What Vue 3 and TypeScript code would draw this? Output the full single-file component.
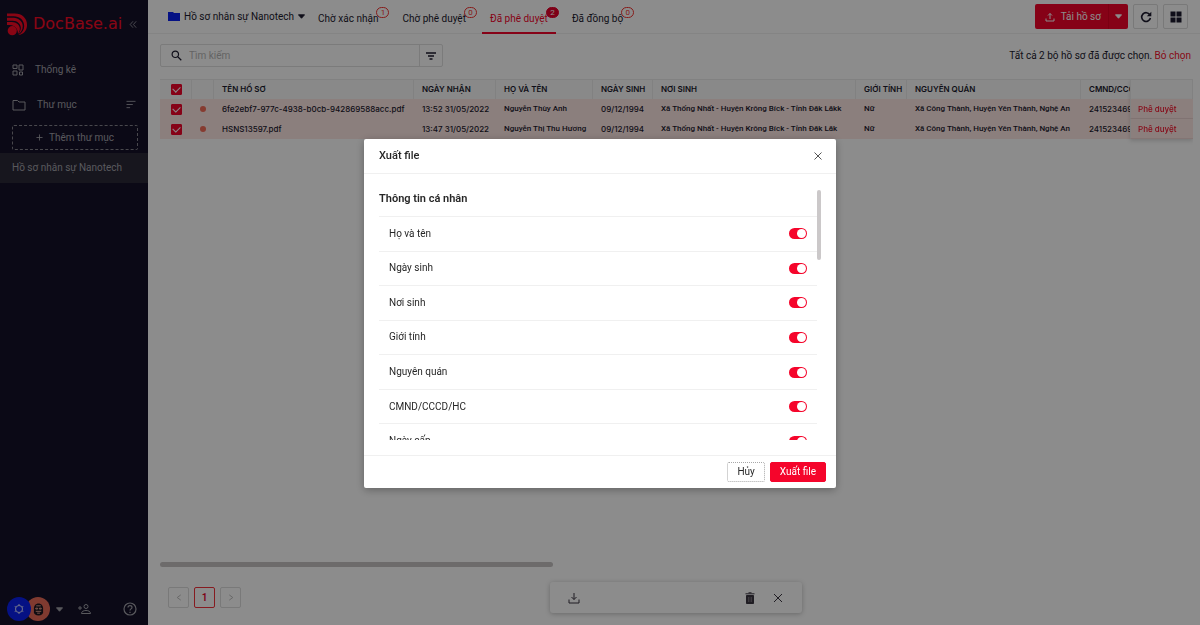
<script setup lang="ts">
import { ref } from 'vue'

interface Tab { label: string; count: string; active?: boolean }
interface Profile {
  file: string; received: string; name: string; dob: string
  birthplace: string; gender: string; origin: string; idNumber: string; selected: boolean
}
interface Field { id: string; label: string; on: boolean }

const tabs: Tab[] = [
  { label: 'Chờ xác nhận', count: '1' },
  { label: 'Chờ phê duyệt', count: '0' },
  { label: 'Đã phê duyệt', count: '2', active: true },
  { label: 'Đã đồng bộ', count: '0' },
]

const columns = ['TÊN HỒ SƠ', 'NGÀY NHẬN', 'HỌ VÀ TÊN', 'NGÀY SINH', 'NƠI SINH', 'GIỚI TÍNH', 'NGUYÊN QUÁN', 'CMND/CCCD/HC']

const rows = ref<Profile[]>([
  {
    file: '6fe2ebf7-977c-4938-b0cb-942869588acc.pdf', received: '13:52 31/05/2022', name: 'Nguyễn Thùy Anh',
    dob: '09/12/1994', birthplace: 'Xã Thống Nhất - Huyện Krông Bíck - Tỉnh Đăk Lăkk', gender: 'Nữ',
    origin: 'Xã Công Thành, Huyện Yên Thành, Nghệ An', idNumber: '241523469', selected: true,
  },
  {
    file: 'HSNS13597.pdf', received: '13:47 31/05/2022', name: 'Nguyễn Thị Thu Hương',
    dob: '09/12/1994', birthplace: 'Xã Thống Nhất - Huyện Krông Bíck - Tỉnh Đăk Lăk', gender: 'Nữ',
    origin: 'Xã Công Thành, Huyện Yên Thành, Nghệ An', idNumber: '241523469', selected: true,
  },
])
const allSelected = ref(true)
const query = ref('')

const fields = ref<Field[]>([
  { id: 'full-name', label: 'Họ và tên', on: true },
  { id: 'dob', label: 'Ngày sinh', on: true },
  { id: 'birthplace', label: 'Nơi sinh', on: true },
  { id: 'gender', label: 'Giới tính', on: true },
  { id: 'origin', label: 'Nguyên quán', on: true },
  { id: 'id-number', label: 'CMND/CCCD/HC', on: true },
  { id: 'issue-date', label: 'Ngày cấp', on: true },
])
</script>

<template>
  <div class="app">
    <aside class="sidebar">
      <div class="brand">
        <svg class="logo" viewBox="0 0 22 24" aria-hidden="true">
          <path d="M0 1h8c8 0 13 5 13 12 0 6-4 10-9 10.500 4-2.500 6-5.500 6-9.500C18 8 13 4 7 4H0z" />
          <path d="M0 5.500h7c5 0 9.500 4 9.500 8.500 0 4-2 7-5 9 2-2 3-5 3-7 0-4-3.500-7.500-8.500-7.500H0z" />
          <path d="M0 10h5c5 0 8.500 3.500 8.500 7 0 2-1 4-2 5 0-5-3.500-9-8.500-9H0z" />
          <circle cx="5.500" cy="19" r="4.800" />
        </svg>
        <span class="brand-name">DocBase.ai</span>
        <button class="icon-btn collapse" aria-label="Thu gọn">
          <svg viewBox="0 0 10 10"><path d="M5 1 1.500 5 5 9M9 1 5.500 5 9 9" /></svg>
        </button>
      </div>
      <nav class="nav">
        <a href="#stats" class="nav-item">
          <svg class="line" viewBox="0 0 12 12"><path d="M1 1h4v3.500H1zM7 1h4v5H7zM1 7h4v4H1zM7.500 8h3v3h-3z" /></svg>
          <span>Thống kê</span>
        </a>
        <a href="#folders" class="nav-item">
          <svg class="line folder" viewBox="0 0 14 12"><path d="M1 1.500h4.500l1.500 1.500h6v8H1z" /></svg>
          <span>Thư mục</span>
          <svg class="line sort" viewBox="0 0 12 10"><path d="M1 1.500h10M1 5h7M1 8.500h4" /></svg>
        </a>
      </nav>
      <button class="add-folder">
        <svg viewBox="0 0 8 8"><path d="M4 .5v7M.5 4h7" /></svg>
        <span>Thêm thư mục</span>
      </button>
      <a href="#nanotech" class="current-folder">Hồ sơ nhân sự Nanotech</a>
      <div class="account">
        <div class="avatars">
          <span class="avatar blue">
            <svg viewBox="0 0 12 12"><circle cx="6" cy="6" r="3.500" /><path d="M6 1v1.500M6 9.500V11M1.700 3.500 3 4.200M9 7.800l1.300.7M1.700 8.500 3 7.800M9 4.200l1.300-.7" /></svg>
          </span>
          <span class="avatar salmon">
            <svg viewBox="0 0 12 14"><path class="hair" d="M1 6c0-3 2-5.500 5-5.500S11 3 11 6v4c0 2-2 3.500-5 3.500S1 12 1 10z" /><path class="face" d="M3.500 3h5M3 5.500h2v1H3zM7 5.500h2v1H7zM3 9h6M4.500 11h3" /></svg>
          </span>
        </div>
        <button class="icon-btn account-caret" aria-label="Tài khoản"><svg viewBox="0 0 8 5"><path d="M.5.5h7L4 4.500z" /></svg></button>
        <button class="icon-btn add-user" aria-label="Thêm người dùng">
          <svg viewBox="0 0 14 12"><path d="M1 5h4M3 3v4" /><circle cx="9" cy="3.500" r="2" /><path d="M4.500 10.500c0-2 2-3 4.500-3s4.500 1 4.500 3z" /></svg>
        </button>
        <button class="icon-btn help" aria-label="Trợ giúp">
          <svg viewBox="0 0 14 14"><circle cx="7" cy="7" r="6" /><path d="M5 5.500C5 4.300 5.900 3.600 7 3.600s2 .7 2 1.800C9 6.800 7 7 7 8.500M7 9.800v1.200" /></svg>
        </button>
      </div>
    </aside>

    <main class="main">
      <header class="topbar">
        <button class="folder-select">
          <svg class="blue-folder" viewBox="0 0 12 9"><path d="M0 0h5l1 1h6v8H0z" /></svg>
          <span>Hồ sơ nhân sự Nanotech</span>
          <svg class="caret" viewBox="0 0 8 5"><path d="M.5.5h7L4 4.500z" /></svg>
        </button>
        <nav class="tabs">
          <a v-for="t in tabs" :key="t.label" href="#" class="tab" :class="{ active: t.active }">
            {{ t.label }}<span class="badge">{{ t.count }}</span>
          </a>
        </nav>
        <div class="actions">
          <div class="upload-group">
            <button class="upload">
              <svg viewBox="0 0 10 10"><path d="M1 6.500V9h8V6.500M5 7V1.500M3 3.500l2-2 2 2" /></svg>
              <span>Tải hồ sơ</span>
            </button>
            <button class="upload-more" aria-label="Tùy chọn tải"><svg viewBox="0 0 8 5"><path d="M.5.5h7L4 4.500z" /></svg></button>
          </div>
          <button class="square" aria-label="Tải lại">
            <svg class="reload" viewBox="0 0 12 12"><path class="arc" d="M9.800 3.700A4.400 4.400 0 1 0 10.400 7" /><path class="tip" d="M11.300.8v4.500H6.800z" /></svg>
          </button>
          <button class="square" aria-label="Dạng lưới">
            <svg class="grid" viewBox="0 0 12 12"><path d="M.5.5h5v5h-5zM6.500.5h5v5h-5zM.5 6.500h5v5h-5zM6.500 6.500h5v5h-5z" /></svg>
          </button>
        </div>
      </header>

      <section class="content">
        <div class="toolbar">
          <div class="search">
            <label class="search-box">
              <svg viewBox="0 0 12 12"><circle cx="4.700" cy="4.700" r="3.500" /><path d="m7.400 7.400 3.800 3.800" /></svg>
              <input v-model="query" type="text" placeholder="Tìm kiếm" aria-label="Tìm kiếm">
            </label>
            <button class="filter" aria-label="Bộ lọc">
              <svg viewBox="0 0 10 8"><path d="M0 1h10M2 4h6M3.500 7h3" /></svg>
            </button>
          </div>
          <p class="selection">Tất cả 2 bộ hồ sơ đã được chọn. <a href="#clear">Bỏ chọn</a></p>
        </div>

        <div class="table-wrap">
          <table class="table">
            <colgroup>
              <col class="c-check"><col class="c-dot"><col class="c-file"><col class="c-date"><col class="c-name"><col class="c-dob">
              <col class="c-place"><col class="c-gender"><col class="c-origin"><col class="c-id"><col><col class="c-action">
            </colgroup>
            <thead>
              <tr>
                <th class="check"><input v-model="allSelected" type="checkbox" class="tick" aria-label="Chọn tất cả"></th>
                <th></th>
                <th v-for="c in columns" :key="c">{{ c }}</th>
                <th></th>
                <th class="sticky"></th>
              </tr>
            </thead>
            <tbody>
              <tr v-for="r in rows" :key="r.file">
                <td class="check"><input v-model="r.selected" type="checkbox" class="tick" :aria-label="r.file"></td>
                <td><span class="dot"></span></td>
                <td>{{ r.file }}</td>
                <td>{{ r.received }}</td>
                <td class="prose">{{ r.name }}</td>
                <td>{{ r.dob }}</td>
                <td class="prose">{{ r.birthplace }}</td>
                <td class="prose">{{ r.gender }}</td>
                <td class="prose">{{ r.origin }}</td>
                <td>{{ r.idNumber }}</td>
                <td></td>
                <td class="sticky"><a href="#approve">Phê duyệt</a></td>
              </tr>
            </tbody>
          </table>
        </div>
        <div class="h-scroll"><div class="h-thumb"></div></div>

        <footer class="pager">
          <button class="page" aria-label="Trang trước" disabled><svg viewBox="0 0 6 8"><path d="M5 1 1 4l4 3" /></svg></button>
          <button class="page current">1</button>
          <button class="page" aria-label="Trang sau" disabled><svg viewBox="0 0 6 8"><path d="m1 1 4 3-4 3" /></svg></button>
        </footer>

        <div class="bulk">
          <button class="icon-btn bulk-icon" aria-label="Tải xuống">
            <svg viewBox="0 0 12 12"><path d="M1 7.500V11h10V7.500M6 1v6.500M3.500 5 6 7.500 8.500 5" /></svg>
          </button>
          <button class="icon-btn bulk-icon trash" aria-label="Xóa">
            <svg viewBox="0 0 12 12"><path d="M2.500 3.500h7v8h-7z" /><path d="M1.500 1.800h9M4.500.8h3" /><path class="slots" d="M4.800 5v5M7.200 5v5" /></svg>
          </button>
          <button class="icon-btn bulk-icon" aria-label="Bỏ chọn">
            <svg viewBox="0 0 12 12"><path d="m2 2 8 8M10 2l-8 8" /></svg>
          </button>
        </div>
      </section>
    </main>

    <div class="mask">
      <div class="modal" role="dialog" aria-modal="true" aria-labelledby="export-title">
        <header class="modal-head">
          <h2 id="export-title">Xuất file</h2>
          <button class="icon-btn close" aria-label="Đóng"><svg viewBox="0 0 8 8"><path d="m.5.5 7 7M7.500.5l-7 7" /></svg></button>
        </header>
        <div class="modal-body">
          <div class="scroll-area">
            <h3>Thông tin cá nhân</h3>
            <ul class="fields">
              <li v-for="f in fields" :key="f.id">
                <label :for="f.id">{{ f.label }}</label>
                <input :id="f.id" v-model="f.on" type="checkbox" role="switch" class="switch">
              </li>
            </ul>
          </div>
          <div class="v-thumb"></div>
        </div>
        <footer class="modal-foot">
          <button class="btn cancel">Hủy</button>
          <button class="btn primary">Xuất file</button>
        </footer>
      </div>
    </div>
  </div>
</template>

<style>
body {
  margin: 0;
}
</style>

<style scoped>
* {
  box-sizing: border-box;
}
.app {
  display: flex;
  height: 100vh;
  overflow: hidden;
  font: 10px/16px Roboto, "Noto Sans", sans-serif;
  color: #1c1a2e;
  background: #fff;
}
button {
  font: inherit;
  color: inherit;
  padding: 0;
  margin: 0;
  border: 0;
  background: none;
}
a {
  color: inherit;
  text-decoration: none;
}
svg {
  display: block;
  flex: none;
  fill: none;
  stroke: currentColor;
}
input {
  margin: 0;
}
.icon-btn {
  display: flex;
  align-items: center;
  justify-content: center;
}

/* Sidebar */
.sidebar {
  flex: none;
  width: 148px;
  display: flex;
  flex-direction: column;
  background: #141129;
  color: #a3a2aa;
}
.brand {
  display: flex;
  align-items: center;
  height: 48px;
  padding: 0 11px 0 7px;
}
.logo {
  width: 21px;
  height: 24px;
  fill: #fa0a26;
  stroke: none;
}
.brand-name {
  margin-left: 5px;
  font: 16px/24px "DejaVu Sans", sans-serif;
  color: #fa0a26;
}
.collapse {
  margin-left: auto;
}
.collapse svg {
  width: 8px;
  height: 9px;
}
.nav {
  padding-top: 4px;
}
.nav-item {
  display: flex;
  align-items: center;
  height: 35px;
  padding: 0 11px 0 12px;
  gap: 11px;
}
.line {
  width: 12px;
  height: 12px;
}
.line.folder {
  width: 14px;
}
.line.sort {
  width: 12px;
  height: 9px;
  margin-left: auto;
}
.add-folder {
  display: flex;
  align-items: center;
  justify-content: center;
  gap: 6px;
  height: 25px;
  margin: 3px 10px 0 12px;
  border: 1px dashed #85848c;
  border-radius: 2px;
}
.add-folder svg {
  width: 7px;
  height: 7px;
}
.current-folder {
  height: 30px;
  margin-top: 3px;
  padding: 0 12px;
  line-height: 30px;
  background: #2a2838;
}
.account {
  display: flex;
  align-items: center;
  height: 32px;
  margin-top: auto;
  padding: 0 11px 0 7px;
}
.avatars {
  display: flex;
}
.avatar {
  display: flex;
  align-items: center;
  justify-content: center;
  width: 24px;
  height: 24px;
  border-radius: 50%;
}
.avatar.blue {
  z-index: 1;
  background: #0a20f0;
  color: #d0d4ff;
}
.avatar.blue svg {
  width: 12px;
  height: 12px;
}
.avatar.salmon {
  margin-left: -5px;
  background: #e86a58;
}
.avatar.salmon svg {
  width: 11px;
  height: 13px;
  stroke: none;
}
.hair {
  fill: #1c1720;
}
.avatar .face {
  stroke: #e8a090;
}
.account-caret {
  margin-left: 6px;
}
.account-caret svg {
  width: 7px;
  height: 5px;
  fill: currentColor;
}
.add-user {
  margin-left: 14px;
}
.add-user svg {
  width: 14px;
  height: 12px;
}
.help {
  margin-left: auto;
}
.help svg {
  width: 14px;
  height: 14px;
  stroke-width: 1.200;
}

/* Top bar */
.main {
  flex: 1;
  min-width: 0;
  display: flex;
  flex-direction: column;
}
.topbar {
  display: flex;
  height: 34px;
  padding: 0 12px 0 20px;
  border-bottom: 1px solid #f0f0f0;
}
.folder-select {
  display: flex;
  align-items: center;
  height: 33px;
}
.folder-select span {
  margin: 0 4px;
}
.blue-folder {
  width: 12px;
  height: 9px;
  fill: #0a20f0;
  stroke: none;
}
.caret {
  width: 7px;
  height: 5px;
  fill: currentColor;
}
.tabs {
  display: flex;
  gap: 8px;
  margin-left: 5px;
}
.tab {
  position: relative;
  height: 34px;
  padding: 3px 8px 0;
  line-height: 31px;
  white-space: nowrap;
}
.tab.active {
  color: #f5052b;
  border-bottom: 2px solid #f5052b;
}
.badge {
  position: absolute;
  top: 7px;
  right: -3px;
  min-width: 13px;
  height: 11px;
  border: 1px solid #f5322f;
  border-radius: 6px;
  font-size: 8px;
  line-height: 9px;
  text-align: center;
  color: #f5322f;
}
.active .badge {
  border-color: #e6002a;
  background: #e6002a;
  color: #fff;
}
.actions {
  display: flex;
  gap: 5px;
  margin: 4px 0 0 auto;
}
.upload-group {
  display: flex;
  height: 25px;
  border-radius: 2px;
  overflow: hidden;
  background: #f5052b;
  color: #fff;
}
.upload {
  display: flex;
  align-items: center;
  gap: 6px;
  padding: 0 7px 0 10px;
}
.upload svg {
  width: 10px;
  height: 10px;
}
.upload-more {
  display: flex;
  align-items: center;
  justify-content: center;
  width: 20px;
  border-left: 1px solid #e00022;
}
.upload-more svg {
  width: 7px;
  height: 5px;
  fill: currentColor;
}
.square {
  display: flex;
  align-items: center;
  justify-content: center;
  width: 25px;
  height: 25px;
  border: 1px solid #dcdcdc;
  border-radius: 2px;
}
.reload,
.grid {
  width: 12px;
  height: 12px;
}
.arc {
  stroke-width: 1.600;
}
.tip,
.grid {
  fill: currentColor;
  stroke: none;
}

/* Content */
.content {
  position: relative;
  flex: 1;
  display: flex;
  flex-direction: column;
  padding: 10px 7px 17px 12px;
}
.toolbar {
  display: flex;
  align-items: center;
  justify-content: space-between;
}
.search {
  display: flex;
  width: 283px;
  height: 23px;
  border: 1px solid #e0e0e0;
  border-radius: 2px;
}
.search-box {
  flex: 1;
  display: flex;
  align-items: center;
  gap: 7px;
  padding-left: 10px;
}
.search-box svg {
  width: 11px;
  height: 11px;
  stroke-width: 1.300;
}
.search-box input {
  flex: 1;
  min-width: 0;
  padding: 0;
  border: 0;
  outline: 0;
  background: none;
  font: inherit;
}
.search-box input::placeholder {
  color: #b5b5b5;
  opacity: 1;
}
.filter {
  display: flex;
  align-items: center;
  justify-content: center;
  width: 23px;
  border-left: 1px solid #e0e0e0;
}
.filter svg {
  width: 10px;
  height: 8px;
  stroke-width: 1.300;
}
.selection {
  margin: 0;
  padding-right: 2px;
}
.selection a,
.sticky a {
  color: #f5122b;
}
.table-wrap {
  flex: 1;
  margin-top: 12px;
  overflow: hidden;
}
.table {
  width: 2736px;
  table-layout: fixed;
  border-collapse: separate;
  border-spacing: 0;
  font: 500 8px/16px Inter, "Noto Sans", sans-serif;
}
.c-check { width: 32px; }
.c-dot { width: 22px; }
.c-file { width: 200px; }
.c-date { width: 82px; }
.c-name { width: 97px; }
.c-dob { width: 60px; }
.c-place { width: 203px; }
.c-gender { width: 51px; }
.c-origin { width: 174px; }
.c-id { width: 110px; }
.c-action { width: 63px; }
.table th,
.table td {
  height: 20px;
  padding: 0 0 0 8px;
  text-align: left;
  white-space: nowrap;
  overflow: hidden;
}
.table th {
  padding-bottom: 1px;
  font-weight: 600;
  background: #fafafa;
  border-top: 1px solid #ececec;
  border-right: 1px solid #ececec;
}
.table td {
  background: #fee7e4;
}
.table .prose {
  font-family: Roboto, "Noto Sans", sans-serif;
}
.table .check {
  padding-left: 11px;
}
.table .sticky {
  position: sticky;
  right: 0;
  border-left: 1px solid #ececec;
  box-shadow: 0 2px 4px rgba(0, 0, 0, .15);
}
.table td.sticky {
  padding-left: 7px;
  border-bottom: 1px solid #eed6d3;
}
.tick {
  appearance: none;
  display: block;
  width: 11px;
  height: 11px;
  border-radius: 1px;
  background: #fff;
  border: 1px solid #f5052b;
}
.tick:checked {
  background: #f5052b;
}
.tick:checked::after {
  content: "";
  display: block;
  width: 4px;
  height: 6px;
  margin: 0 auto;
  border: solid #fff;
  border-width: 0 1px 1px 0;
  transform: rotate(45deg);
}
.dot {
  display: block;
  width: 6px;
  height: 6px;
  border-radius: 50%;
  background: #f56c58;
}
.h-scroll {
  height: 5px;
}
.h-thumb {
  width: 38%;
  height: 5px;
  border-radius: 3px;
  background: #c6c4c4;
}
.pager {
  display: flex;
  gap: 5px;
  margin-top: 20px;
  padding-left: 8px;
}
.page {
  display: flex;
  align-items: center;
  justify-content: center;
  width: 21px;
  height: 21px;
  border: 1px solid #dcdcdc;
  border-radius: 2px;
  color: #b5b5b5;
}
.page svg {
  width: 6px;
  height: 7px;
}
.page.current {
  border-color: #f5323b;
  color: #e6002a;
  font-weight: 600;
}
.bulk {
  position: absolute;
  right: 8px;
  bottom: 12px;
  left: 12px;
  display: flex;
  align-items: center;
  gap: 16px;
  width: 252px;
  height: 31px;
  margin: 0 auto;
  padding: 0 18px;
  border-radius: 3px;
  background: #fff;
  box-shadow: 0 1px 5px rgba(0, 0, 0, .25);
  color: #3b3540;
}
.bulk-icon svg {
  width: 12px;
  height: 12px;
}
.trash {
  margin-left: auto;
}
.trash svg {
  fill: currentColor;
}
.slots {
  stroke: #857f88;
}

/* Export dialog */
.mask {
  position: fixed;
  inset: 0;
  z-index: 10;
  display: flex;
  align-items: center;
  justify-content: center;
  background: rgba(0, 0, 0, .45);
}
.modal {
  width: 472px;
  margin-top: 2px;
  border-radius: 2px;
  background: #fff;
  color: #262626;
  box-shadow: 0 2px 8px rgba(0, 0, 0, .3);
}
.modal-head {
  display: flex;
  align-items: center;
  justify-content: space-between;
  height: 35px;
  padding: 0 14px 0 15px;
  border-bottom: 1px solid #f0f0f0;
}
h2,
h3 {
  margin: 0;
  font-size: 11px;
  line-height: 18px;
  font-weight: 600;
}
h2 {
  font-weight: 500;
}
.close {
  color: #555;
}
.close svg {
  width: 8px;
  height: 8px;
}
.modal-body {
  display: flex;
  padding: 16px 15px 15px;
}
.scroll-area {
  flex: 1;
  height: 250px;
  overflow-y: auto;
  scrollbar-width: none;
}
.fields {
  display: grid;
  grid-auto-rows: 1fr;
  height: 242px;
  margin: 8px 0 0;
  padding: 0;
  list-style: none;
}
.fields li {
  display: flex;
  align-items: center;
  justify-content: space-between;
  padding: 0 10px;
  border-top: 1px solid #f0f0f0;
}
.switch {
  appearance: none;
  display: flex;
  justify-content: flex-start;
  width: 18px;
  height: 11px;
  padding: 1px;
  border-radius: 6px;
  background: #bfbfbf;
}
.switch::after {
  content: "";
  width: 9px;
  height: 9px;
  border-radius: 50%;
  background: #fff;
}
.switch:checked {
  justify-content: flex-end;
  background: #f5052b;
}
.v-thumb {
  width: 4px;
  height: 70px;
  border-radius: 2px;
  background: #cbc8c9;
}
.modal-foot {
  display: flex;
  justify-content: flex-end;
  gap: 5px;
  padding: 6px 10px;
  border-top: 1px solid #f0f0f0;
}
.btn {
  height: 20px;
  padding: 0 9px;
  border: 1px solid #d0d0d0;
  border-radius: 2px;
  line-height: 18px;
}
.cancel {
  border-style: dotted;
  border-color: #a8a8a8;
}
.primary {
  border-color: #f5052b;
  background: #f5052b;
  color: #fff;
}
</style>
